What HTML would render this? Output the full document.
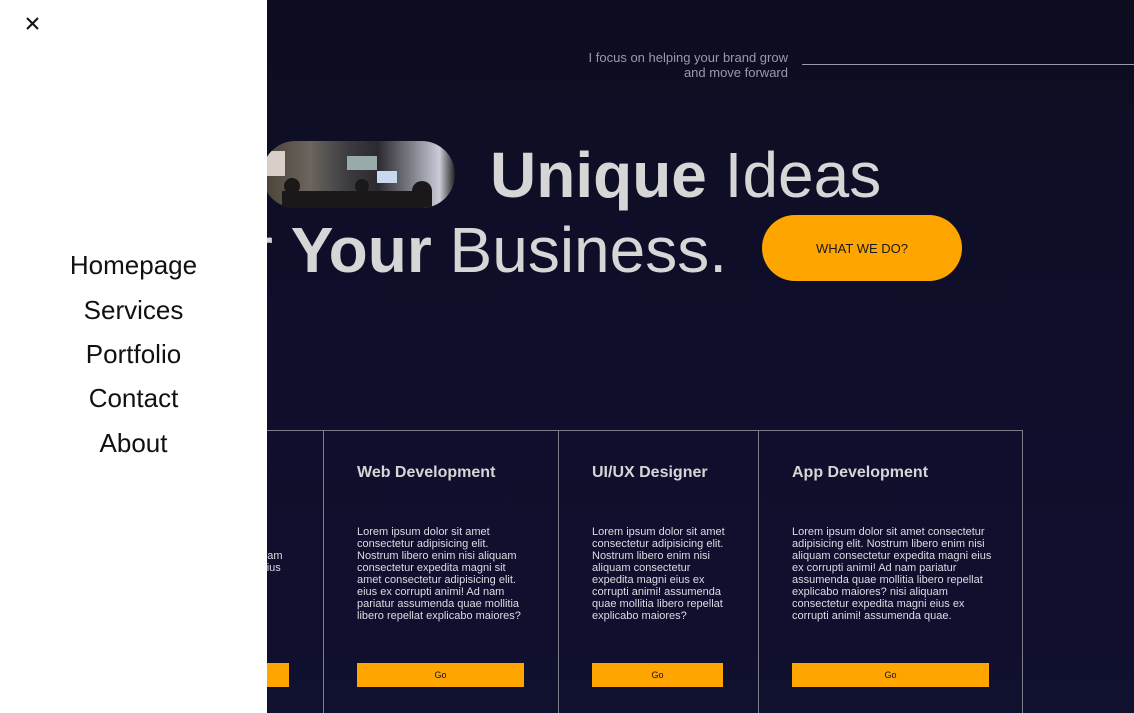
<!DOCTYPE html>
<html><head><meta charset="utf-8"><style>
*{margin:0;padding:0;box-sizing:border-box}
html,body{width:1134px;height:713px;overflow:hidden}
body{position:relative;font-family:"Liberation Sans",Arial,sans-serif;background:linear-gradient(180deg,#0d0d20 0%,#0f0f2c 50%,#10102f 100%)}
.a{position:absolute}
.tag{right:346px;top:50px;text-align:right;color:#9a9aa6;font-size:13px;line-height:15px}
.line{left:802px;top:64px;width:332px;height:1px;background:#9a9aa6}
.h{color:#d6d6d6;font-size:64px;white-space:nowrap;line-height:64px}
.pill{left:262px;top:141px;width:193px;height:67px;border-radius:34px;overflow:hidden;background:linear-gradient(90deg,#4a4036 0%,#6b655d 25%,#3b3a3e 45%,#2c2a30 60%,#8a8c96 80%,#c9ccd6 92%,#222 100%)}
.btn{left:762px;top:215px;width:200px;height:66px;border-radius:33px;background:#ffa500;color:#1a1a1a;font-size:13px;display:flex;align-items:center;justify-content:center}
.card{top:430px;height:283px;border:1px solid #7c7c88;border-bottom:none}
.card h3{position:absolute;left:33px;top:33px;color:#d6d6d6;font-size:16px}
.card p{position:absolute;left:33px;top:95px;color:#dcdce4;font-size:11px;line-height:12px}
.card .go{position:absolute;left:33px;top:232px;height:24px;background:#ffa500;color:#111;font-size:9px;display:flex;align-items:center;justify-content:center}
.side{left:0;top:0;width:267px;height:713px;background:#fff}
.menu{position:absolute;left:0;width:267px;text-align:center;font-size:26px;color:#111}
</style></head><body>
<div class="a tag">I focus on helping your brand grow<br>and move forward</div>
<div class="a line"></div>
<div class="a pill"><svg width="193" height="67"><rect x="115" y="30" width="20" height="12" fill="#c8d8f0"/><rect x="85" y="15" width="30" height="14" fill="#9aa"/><rect x="5" y="10" width="18" height="25" fill="#d8d0c8"/><g fill="#1a1818"><circle cx="30" cy="45" r="8"/><rect x="20" y="50" width="150" height="17"/><circle cx="160" cy="50" r="10"/><circle cx="100" cy="45" r="7"/></g></svg></div>
<div class="a h" style="left:490px;top:143px"><b>Unique</b> Ideas</div>
<div class="a h" style="right:407px;top:218px">For <b>Your</b> Business.</div>
<div class="a btn">WHAT WE DO?</div>

<div class="a card" style="left:89px;width:235px"><h3>Graphic Design</h3><p style="width:166px">Lorem ipsum dolor sit amet consectetur adipisicing elit. Nostrum libero enim nisi aliquam consectetur expedita magni eius ex corrupti animi! assumenda quae mollitia libero repellat explicabo.</p><div class="go" style="width:166px">Go</div></div>
<div class="a card" style="left:323px;width:236px"><h3>Web Development</h3><p style="width:170px">Lorem ipsum dolor sit amet consectetur adipisicing elit. Nostrum libero enim nisi aliquam consectetur expedita magni sit amet consectetur adipisicing elit. eius ex corrupti animi! Ad nam pariatur assumenda quae mollitia libero repellat explicabo maiores?</p><div class="go" style="width:167px">Go</div></div>
<div class="a card" style="left:558px;width:201px"><h3>UI/UX Designer</h3><p style="width:135px">Lorem ipsum dolor sit amet consectetur adipisicing elit. Nostrum libero enim nisi aliquam consectetur expedita magni eius ex corrupti animi! assumenda quae mollitia libero repellat explicabo maiores?</p><div class="go" style="width:131px">Go</div></div>
<div class="a card" style="left:758px;width:265px"><h3>App Development</h3><p style="width:200px">Lorem ipsum dolor sit amet consectetur adipisicing elit. Nostrum libero enim nisi aliquam consectetur expedita magni eius ex corrupti animi! Ad nam pariatur assumenda quae mollitia libero repellat explicabo maiores? nisi aliquam consectetur expedita magni eius ex corrupti animi! assumenda quae.</p><div class="go" style="width:197px">Go</div></div>

<div class="a side">
<svg class="a" style="left:26px;top:17px" width="13" height="13"><path d="M1 1L12 12M12 1L1 12" stroke="#111" stroke-width="2"/></svg>
<div class="menu" style="top:250px">Homepage</div>
<div class="menu" style="top:295px">Services</div>
<div class="menu" style="top:339px">Portfolio</div>
<div class="menu" style="top:383px">Contact</div>
<div class="menu" style="top:428px">About</div>
</div>
</body></html>
